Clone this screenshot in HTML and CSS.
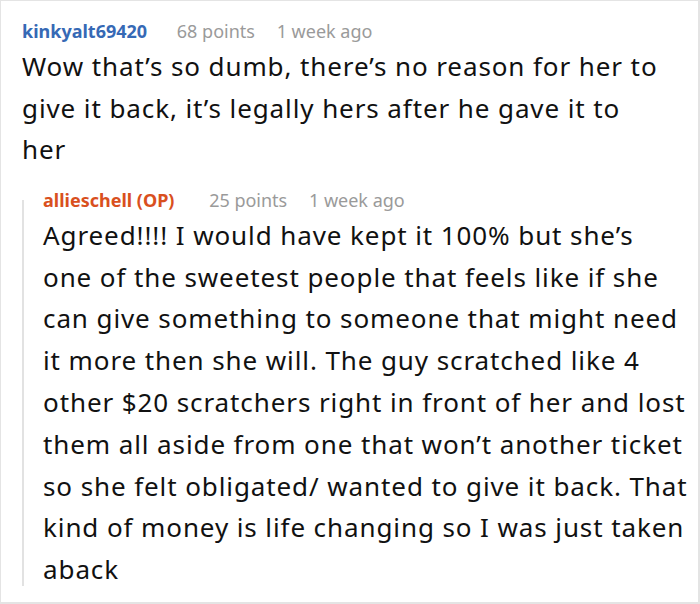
FILE: index.html
```html
<!DOCTYPE html>
<html lang="en">
<head>
<meta charset="utf-8">
<title>Comment thread</title>
<link rel="stylesheet" href="styles.css">
</head>
<body>
<div class="card">
  <div class="comment">
    <div class="meta">
      <span class="user">kinkyalt69420</span>
      <span class="points">68 points</span>
      <span class="time">1 week ago</span>
    </div>
    <p class="text main-text">Wow that’s so dumb, there’s no reason for her to give it back, it’s legally hers after he gave it to her</p>
  </div>
  <div class="reply">
    <div class="rail"></div>
    <div class="reply-body">
      <div class="meta">
        <span class="user op">allieschell (OP)</span>
        <span class="points">25 points</span>
        <span class="time">1 week ago</span>
      </div>
      <p class="text reply-text">Agreed!!!! I would have kept it 100% but she’s one of the sweetest people that feels like if she can give something to someone that might need it more then she will. The guy scratched like 4 other $20 scratchers right in front of her and lost them all aside from one that won’t another ticket so she felt obligated/ wanted to give it back. That kind of money is life changing so I was just taken aback</p>
    </div>
  </div>
</div>
</body>
</html>
```

FILE: styles.css
```css
html, body {
  margin: 0;
  padding: 0;
  background: #ffffff;
}

body {
  font-family: "Noto Sans", "Open Sans", "DejaVu Sans", sans-serif;
  color: #1a1a1a;
}

.card {
  box-sizing: border-box;
  width: 700px;
  height: 604px;
  border-style: solid;
  border-color: #e4e4e4;
  border-width: 1px 2px 2px 1px;
  padding: 15px 8px 0 21px;
  overflow: hidden;
}

.meta {
  font-size: 18px;
  line-height: 30px;
  white-space: nowrap;
}

.user {
  font-weight: 700;
  color: #3669b5;
  margin-right: 25px;
}

.user.op {
  color: #d9501e;
  margin-right: 30px;
}

.points {
  color: #9a9a9a;
  margin-right: 17px;
}

.time {
  color: #9a9a9a;
}

.text {
  margin: 0;
  font-size: 26px;
  line-height: 41.6px;
  letter-spacing: 0.9px;
  color: #111111;
}

.main-text {
  margin-right: 30px;
}

.reply-text {
  line-height: 41.8px;
}

.reply {
  display: flex;
  margin-top: 14px;
}

.rail {
  flex: 0 0 2px;
  background: #e2e2e2;
  margin-top: 15px;
  margin-bottom: 5px;
}

.reply-body {
  padding-left: 19px;
  flex: 1;
}
```
